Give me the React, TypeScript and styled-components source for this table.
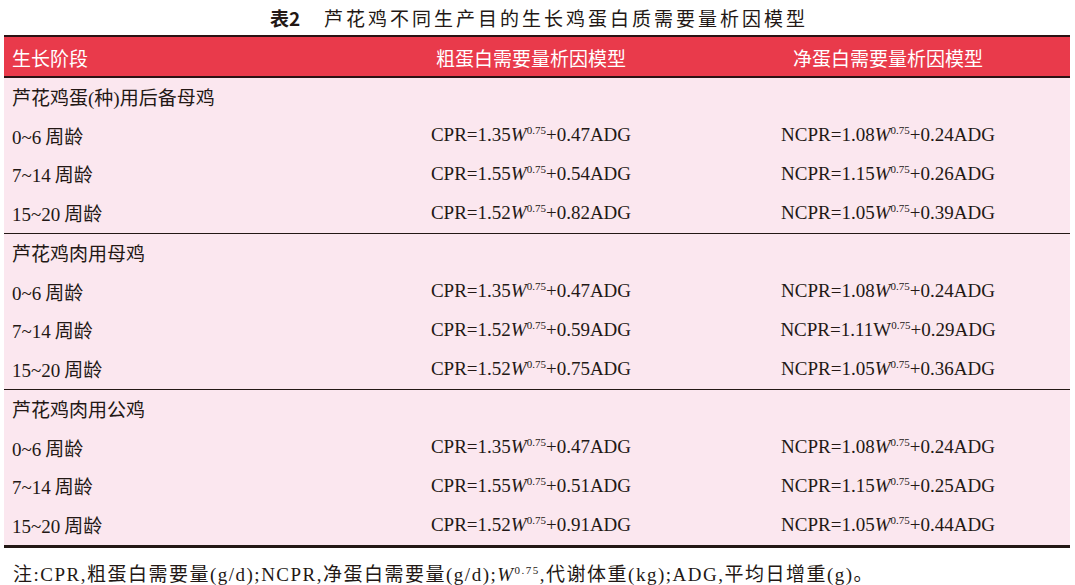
import React from "react";
import styled, { createGlobalStyle } from "styled-components";

const GlobalStyle = createGlobalStyle`
  html, body {
    margin: 0;
    padding: 0;
    background: #ffffff;
  }
  body {
    font-family: "Liberation Serif", "Noto Sans CJK SC", serif;
    color: #231815;
  }
`;

type Formula = { name: string; a: string; b: string; plainW?: boolean };
type Row = { stage: string; cpr: Formula; ncpr: Formula };
type Group = { title: string; rows: Row[] };

const f = (name: string, a: string, b: string, plainW?: boolean): Formula => ({ name, a, b, plainW });

const groups: Group[] = [
  {
    title: "芦花鸡蛋(种)用后备母鸡",
    rows: [
      { stage: "0~6", cpr: f("CPR", "1.35", "0.47"), ncpr: f("NCPR", "1.08", "0.24") },
      { stage: "7~14", cpr: f("CPR", "1.55", "0.54"), ncpr: f("NCPR", "1.15", "0.26") },
      { stage: "15~20", cpr: f("CPR", "1.52", "0.82"), ncpr: f("NCPR", "1.05", "0.39") },
    ],
  },
  {
    title: "芦花鸡肉用母鸡",
    rows: [
      { stage: "0~6", cpr: f("CPR", "1.35", "0.47"), ncpr: f("NCPR", "1.08", "0.24") },
      { stage: "7~14", cpr: f("CPR", "1.52", "0.59"), ncpr: f("NCPR", "1.11", "0.29", true) },
      { stage: "15~20", cpr: f("CPR", "1.52", "0.75"), ncpr: f("NCPR", "1.05", "0.36") },
    ],
  },
  {
    title: "芦花鸡肉用公鸡",
    rows: [
      { stage: "0~6", cpr: f("CPR", "1.35", "0.47"), ncpr: f("NCPR", "1.08", "0.24") },
      { stage: "7~14", cpr: f("CPR", "1.55", "0.51"), ncpr: f("NCPR", "1.15", "0.25") },
      { stage: "15~20", cpr: f("CPR", "1.52", "0.91"), ncpr: f("NCPR", "1.05", "0.44") },
    ],
  },
];

function FormulaText({ v }: { v: Formula }) {
  return (
    <span>
      {v.name}={v.a}
      {v.plainW ? "W" : <W>W</W>}
      <Sup>0.75</Sup>+{v.b}ADG
    </span>
  );
}

export default function App() {
  return (
    <Page>
      <GlobalStyle />
      <Caption>
        <b>表2</b>
        <span>芦花鸡不同生产目的生长鸡蛋白质需要量析因模型</span>
      </Caption>
      <Table>
        <HeadRow>
          <Cell>生长阶段</Cell>
          <Cell $center>粗蛋白需要量析因模型</Cell>
          <Cell $center>净蛋白需要量析因模型</Cell>
        </HeadRow>
        {groups.map((g, gi) => (
          <GroupBlock key={g.title} $last={gi === groups.length - 1}>
            <BodyRow>
              <Cell>{g.title}</Cell>
            </BodyRow>
            {g.rows.map((r) => (
              <BodyRow key={r.stage}>
                <Cell>
                  {r.stage}
                  <Cjk>周龄</Cjk>
                </Cell>
                <Cell $center>
                  <FormulaText v={r.cpr} />
                </Cell>
                <Cell $center>
                  <FormulaText v={r.ncpr} />
                </Cell>
              </BodyRow>
            ))}
          </GroupBlock>
        ))}
      </Table>
      <Note>
        注:CPR,粗蛋白需要量(g/d);NCPR,净蛋白需要量(g/d);<W>W</W>
        <Sup>0.75</Sup>,代谢体重(kg);ADG,平均日增重(g)。
      </Note>
    </Page>
  );
}

const Page = styled.div`
  width: 1075px;
  height: 585px;
  padding: 0 5px 0 4px;
  box-sizing: border-box;
  overflow: hidden;
`;

const Caption = styled.div`
  height: 35px;
  display: flex;
  justify-content: center;
  align-items: center;
  gap: 24px;
  padding-left: 4px;
  font-family: "Noto Sans CJK SC", sans-serif;
  font-size: 19px;
  letter-spacing: 3px;
  color: #231815;

  & b {
    font-weight: 700;
    letter-spacing: 0;
  }
  & span {
    font-weight: 400;
  }
`;

const Table = styled.div`
  background: #fbe7ef;
  display: flex;
  flex-direction: column;
`;

const rowGrid = `
  display: grid;
  grid-template-columns: 352px 350px 1fr;
  align-items: center;
`;

const HeadRow = styled.div`
  ${rowGrid}
  height: 38px;
  background: #e93a4b;
  color: #ffffff;
  border-top: 2px solid #2b1214;
  border-bottom: 2px solid #2b1214;
  font-family: "Noto Sans CJK SC", sans-serif;
  font-size: 19px;
  padding-top: 1px;
  box-sizing: content-box;
`;

const GroupBlock = styled.div<{ $last?: boolean }>`
  border-bottom: ${(p) => (p.$last ? "3px" : "1px")} solid #231815;
  display: flex;
  flex-direction: column;
`;

const BodyRow = styled.div`
  ${rowGrid}
  height: 38.75px;
  font-size: 19px;
  padding-bottom: 2px;
  box-sizing: border-box;
`;

const Cell = styled.div<{ $center?: boolean }>`
  padding-left: ${(p) => (p.$center ? "0" : "8px")};
  text-align: ${(p) => (p.$center ? "center" : "left")};
  white-space: nowrap;
  font-family: "Liberation Serif", "Noto Sans CJK SC", serif;
`;

const Cjk = styled.span`
  font-family: "Noto Sans CJK SC", sans-serif;
  margin-left: 4px;
`;

const W = styled.i`
  font-style: italic;
`;

const Sup = styled.sup`
  font-size: 11px;
  vertical-align: 7px;
  line-height: 0;
`;

const Note = styled.div`
  padding: 11px 0 0 9px;
  font-size: 19px;
  letter-spacing: 1.5px;
  font-family: "Liberation Serif", "Noto Sans CJK SC", serif;
  white-space: nowrap;
`;
